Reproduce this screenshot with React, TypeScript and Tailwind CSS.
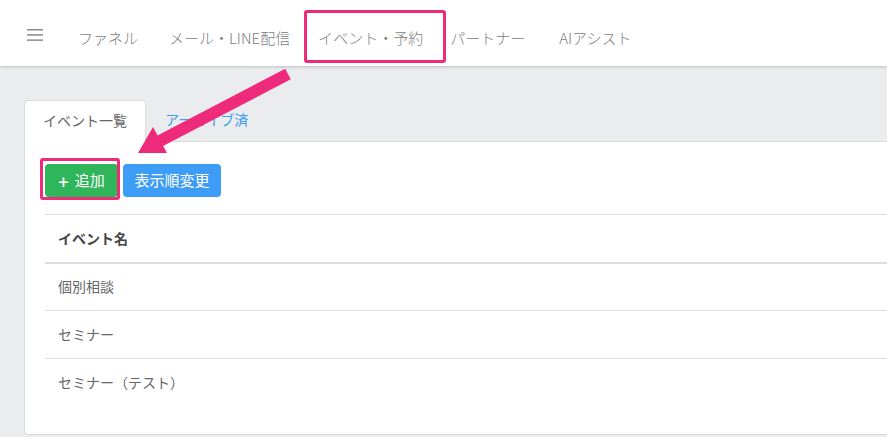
import React from 'react';

const navItems = [
  { label: 'ファネル', cls: 'ml-[35px]' },
  { label: 'メール・LINE配信', cls: 'ml-[31px]' },
  { label: 'イベント・予約', cls: 'ml-[28px]' },
  { label: 'パートナー', cls: 'ml-[27px]' },
  { label: 'AIアシスト', cls: 'ml-[34px]' },
];
const rows = ['個別相談', 'セミナー', 'セミナー（テスト）'];

function Hamburger() {
  return (
    <svg width="16" height="14" viewBox="0 0 16 14" className="mt-[4px] text-[#8a8a8a]">
      <rect x="0" y="1" width="16" height="1.5" fill="currentColor" />
      <rect x="0" y="6.2" width="16" height="1.5" fill="currentColor" />
      <rect x="0" y="11.4" width="16" height="1.5" fill="currentColor" />
    </svg>
  );
}

export default function App() {
  return (
    <div
      className="relative h-[437px] w-[887px] overflow-hidden bg-[#ebecee] text-[15px]"
      style={{ fontFamily: '"Noto Sans CJK JP", "Noto Sans", sans-serif' }}
    >
      <header className="relative z-10 flex h-[66px] items-center bg-white pl-[27px] shadow-[0_1px_3px_rgba(0,0,0,0.2)]">
        <Hamburger />
        <nav className="flex items-center pt-[10px] font-light text-[#808080]">
          {navItems.map((item) => (
            <span key={item.label} className={`whitespace-nowrap ${item.cls}`}>
              {item.label}
            </span>
          ))}
        </nav>
      </header>

      <main className="pl-[24px] pt-[34px]">
        <div className="flex h-[41px] items-end">
          <div className="relative z-10 -mb-px flex h-[42px] w-[122px] items-center justify-center rounded-t border border-b-0 border-[#dcdcdc] bg-white pb-[2px] text-[14px] text-[#666]">
            イベント一覧
          </div>
          <div className="flex h-[41px] items-center pb-[2px] pl-[19px] text-[14px] text-[#3d9cf5]">アーカイブ済</div>
        </div>

        <section className="h-[294px] w-[900px] rounded-bl border border-[#dcdcdc] bg-white pl-[20px] pt-[22px]">
          <div className="flex items-center gap-[5px]">
            <button className="flex h-[33px] w-[73px] items-center justify-center rounded bg-[#2fb65b] text-[15px] text-white">
              <span className="mr-[6px] text-[18px] font-medium leading-none">+</span>追加
            </button>
            <button className="flex h-[33px] w-[98px] items-center justify-center rounded bg-[#3d9cf5] text-[15px] text-white">
              表示順変更
            </button>
          </div>

          <table className="mt-[17px] w-full border-collapse text-left text-[14px]">
            <thead>
              <tr className="border-t border-b-2 border-[#dedede]">
                <th className="h-[48px] pl-[13px] font-bold text-[#444]">イベント名</th>
              </tr>
            </thead>
            <tbody>
              {rows.map((r, i) => (
                <tr key={r} className={i < rows.length - 1 ? 'border-b border-[#dedede]' : ''}>
                  <td className="h-[48px] pl-[13px] text-[#666]">{r}</td>
                </tr>
              ))}
            </tbody>
          </table>
        </section>
      </main>

      {/* annotation boxes */}
      <div className="pointer-events-none absolute left-[304px] top-[10px] z-20 h-[53px] w-[142px] rounded-[3px] border-[3px] border-[#ee2a7b]" />
      <div className="pointer-events-none absolute left-[40px] top-[158px] z-20 h-[42px] w-[80px] rounded-[3px] border-[3px] border-[#ee2a7b]" />

      {/* annotation arrow */}
      <svg className="pointer-events-none absolute left-0 top-0 z-30" width="887" height="437">
        <line x1="288" y1="74" x2="156" y2="143" stroke="#ee2a7b" strokeWidth="12" />
        <polygon points="138,153 153,127 167,153" fill="#ee2a7b" />
      </svg>
    </div>
  );
}
